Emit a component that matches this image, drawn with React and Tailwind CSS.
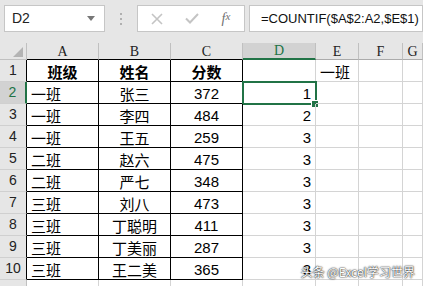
import React from "react";

const sans = "font-['Liberation_Sans','Noto_Sans_CJK_SC',sans-serif]";
const cjk = "font-['Noto_Sans_CJK_SC',sans-serif]";
const serif = "font-['Liberation_Serif',serif]";

const data = [
  ["班级", "姓名", "分数", "", "一班"],
  ["一班", "张三", "372", "1"],
  ["一班", "李四", "484", "2"],
  ["一班", "王五", "259", "3"],
  ["二班", "赵六", "475", "3"],
  ["二班", "严七", "348", "3"],
  ["三班", "刘八", "473", "3"],
  ["三班", "丁聪明", "411", "3"],
  ["三班", "丁美丽", "287", "3"],
  ["三班", "王二美", "365", "3"],
];

const letters = ["A", "B", "C", "D", "E", "F", "G"];

/**
 * Formula bar on top: name box, buttons and the formula.
 */
function FormulaBar() {
  return (
    <div className="h-[43px] bg-[#e6e6e6] flex items-start pt-[5px] pl-[4px]">
      <div className="w-[101px] h-[27px] bg-white border border-[#c6c6c6] flex items-center justify-between pl-[7px] pr-[9px]">
        <span className={`${sans} text-[14px] text-[#222]`}>D2</span>
        <svg width="8" height="5" viewBox="0 0 8 5">
          <path d="M0 0h8L4 5z" fill="#777" />
        </svg>
      </div>
      <div className="w-[32px] h-[27px] flex flex-col items-center justify-center gap-[3px]">
        <span className="w-[2px] h-[2px] bg-[#b0b0b0]" />
        <span className="w-[2px] h-[2px] bg-[#b0b0b0]" />
        <span className="w-[2px] h-[2px] bg-[#b0b0b0]" />
      </div>
      <div className="w-[108px] h-[27px] bg-white border border-[#c6c6c6] flex items-center">
        <div className="w-[38px] flex justify-center">
          <svg width="12" height="12" viewBox="0 0 12 12">
            <path d="M1 1l10 10M11 1L1 11" stroke="#c4c4c4" strokeWidth="1.6" />
          </svg>
        </div>
        <div className="w-[32px] flex justify-center">
          <svg width="14" height="11" viewBox="0 0 14 11">
            <path d="M1 5.5l4 4 8-8.5" stroke="#c4c4c4" strokeWidth="2" fill="none" />
          </svg>
        </div>
        <div className={`flex-1 flex justify-center ${serif} italic text-[14px] text-[#707070]`}>
          f<span className="text-[11px]">x</span>
        </div>
      </div>
      <div className="ml-[4px] flex-1 h-[27px] bg-white border border-[#c6c6c6] flex items-center pl-[11px]">
        <span className={`${sans} text-[13px] text-[#111] whitespace-nowrap`}>=COUNTIF($A$2:A2,$E$1)</span>
      </div>
    </div>
  );
}

function ColHeader({ letter, i }) {
  const sel = letter === "D";
  let bb = "border-b border-b-[#ababab]";
  if (i < 3) bb = "border-b border-b-black";
  if (sel) bb = "border-b-2 border-b-[#217346]";
  return (
    <div
      className={`flex items-center justify-center border-r border-r-[#c0c0c0] ${bb} ${serif} text-[14px] ${
        sel ? "bg-[#d2d2d2] text-[#217346]" : "bg-[#e6e6e6] text-[#222]"
      }`}
    >
      {letter}
    </div>
  );
}

function RowHeader({ n }) {
  const sel = n === 2;
  return (
    <div
      className={`flex items-center justify-center border-b border-b-[#d0d0d0] ${sans} text-[14px] ${
        sel
          ? "bg-[#d2d2d2] text-[#217346] border-r-2 border-r-[#217346]"
          : n >= 1 && n <= 10
          ? "bg-[#e6e6e6] text-[#222] border-r border-r-black"
          : "bg-[#e6e6e6] border-r border-r-[#c0c0c0]"
      }`}
    >
      {n <= 10 ? n : ""}
    </div>
  );
}

function Cell({ value, col, row }) {
  const table = col < 3 && row <= 10;
  const borders = table ? "border-r border-b border-black" : "border-r border-b border-[#d4d4d4]";
  const left = col === 2 && row <= 10 ? "border-r-black" : "";
  let align = "justify-start pl-[4px]";
  let font = cjk;
  if (row === 1 && col < 3) align = "justify-center";
  else if (col === 1) align = "justify-center";
  else if (col === 2) {
    align = "justify-center";
    font = sans;
  } else if (col === 3) {
    align = "justify-end pr-[4px]";
    font = sans;
  }
  return (
    <div
      className={`relative flex items-center ${align} ${borders} ${left} ${font} text-[15px] leading-none text-black ${
        row === 1 && col < 3 ? "font-bold" : ""
      }`}
    >
      <span className="pt-[2px]">{value}</span>
      {col === 3 && row === 2 && (
        <div className="absolute -left-[1px] -top-[1px] w-[75px] h-[24px] border-2 border-[#217346]">
          <div className="absolute left-[67px] top-[17px] w-[8px] h-[8px] bg-[#217346] border border-white" />
        </div>
      )}
    </div>
  );
}

export default function App() {
  const rows = [...data, []];
  return (
    <div className="w-[423px] h-[286px] overflow-hidden bg-white relative">
      <FormulaBar />
      <div className="grid grid-cols-[27px_72px_72px_72px_73px_43px_44px_1fr] grid-rows-[17px_repeat(11,22px)]">
        <div className="bg-[#e6e6e6] border-r border-b border-[#c0c0c0] flex items-end justify-end pr-[3px] pb-[2px]">
          <svg width="10" height="10" viewBox="0 0 10 10">
            <path d="M10 0V10H0z" fill="#b4b4b4" />
          </svg>
        </div>
        {letters.map((l, i) => (
          <ColHeader key={l} letter={l} i={i} />
        ))}
        {rows.map((r, ri) => (
          <React.Fragment key={ri}>
            <RowHeader n={ri + 1} />
            {letters.map((l, ci) => (
              <Cell key={l} value={r[ci] || ""} col={ci} row={ri + 1} />
            ))}
          </React.Fragment>
        ))}
      </div>
      <div
        className={`absolute right-[8px] bottom-[5px] ${cjk} text-[12px] text-white [text-shadow:0_0_2px_rgba(0,0,0,0.9),0_0_1px_rgba(0,0,0,0.9)]`}
      >
        头条 @Excel学习世界
      </div>
    </div>
  );
}
